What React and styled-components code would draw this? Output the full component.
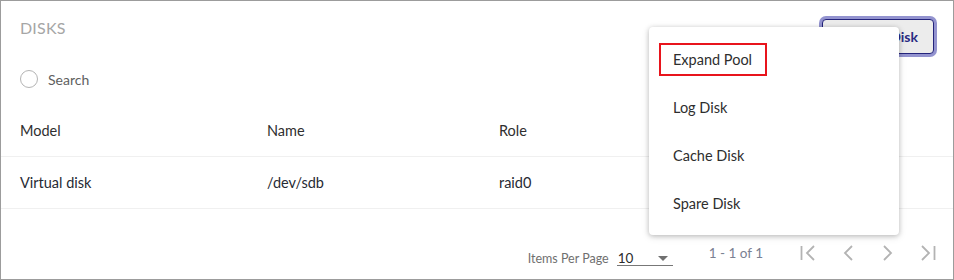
import React from "react";
import styled, { createGlobalStyle } from "styled-components";

const Global = createGlobalStyle`
  html, body { margin: 0; padding: 0; background: #fff; }
  body { font-family: Lato, "Open Sans", "Liberation Sans", sans-serif; }
  * { box-sizing: border-box; }
`;

const Card = styled.div`
  position: relative;
  width: 954px;
  height: 280px;
  border: 1px solid #9c9c9c;
  background: #fff;
  display: flex;
  flex-direction: column;
`;

const Header = styled.div`
  display: flex;
  justify-content: space-between;
  align-items: flex-start;
  padding: 16px 19px 0 19px;
`;

const Title = styled.h2`
  margin: 0;
  font-size: 16px;
  line-height: 22px;
  font-weight: 400;
  color: #a6a6a6;
  letter-spacing: 0.2px;
`;

const Button = styled.button`
  margin-top: 2px;
  height: 35px;
  width: 112px;
  border: 1px solid #24247c;
  border-radius: 4px;
  box-shadow: 0 0 0 3px #9393cf;
  background: #ececec;
  color: #2a2a82;
  font-family: inherit;
  font-weight: 700;
  font-size: 14px;
  display: flex;
  align-items: center;
  justify-content: flex-end;
  padding: 0 15px;
  gap: 8px;
`;

const SearchRow = styled.div`
  display: flex;
  align-items: center;
  gap: 10px;
  height: 34px;
  margin-top: 8px;
  padding-left: 19px;
`;

const Radio = styled.span`
  width: 18px;
  height: 18px;
  border-radius: 50%;
  border: 1.5px solid #b4b4b4;
`;

const SearchText = styled.span`
  font-size: 14px;
  color: #606060;
`;

const Table = styled.div`
  margin-top: 9px;
`;

const Row = styled.div`
  display: grid;
  grid-template-columns: 247px 232px 1fr;
  align-items: center;
  height: ${(p) => p.$h}px;
  padding-left: 19px;
  border-bottom: 1px solid #f0f0f0;
  font-size: 14.5px;
  color: ${(p) => (p.$head ? "#2f2f2f" : "#262a33")};
`;

const Footer = styled.div`
  display: flex;
  justify-content: flex-end;
  align-items: flex-start;
  margin-top: 34px;
  padding-right: 17px;
  height: 24px;
`;

const PageSize = styled.div`
  display: flex;
  align-items: flex-end;
  gap: 8px;
  margin-top: 7px;
  height: 16px;
`;

const SizeLabel = styled.span`
  font-size: 12.5px;
  line-height: 14px;
  color: #6f6f6f;
`;

const Select = styled.div`
  width: 56px;
  height: 16px;
  border-bottom: 1px solid #777;
  display: flex;
  align-items: center;
  justify-content: space-between;
  padding: 0 5px 0 1px;
  font-size: 13.5px;
  color: #2b2b2b;
`;

const Caret = styled.span`
  width: 0;
  height: 0;
  border-left: 5px solid transparent;
  border-right: 5px solid transparent;
  border-top: 5px solid #707070;
  margin-top: 2px;
`;

const Range = styled.span`
  font-size: 13.5px;
  line-height: 20px;
  color: #7a8092;
  margin-left: 36px;
`;

const Pager = styled.div`
  display: flex;
  gap: 24px;
  margin-left: 37px;
  height: 20px;
  align-items: center;
`;

const PagerIcon = styled.svg`
  width: 16px;
  height: 16px;
  stroke: #b3b3b3;
  stroke-width: 1.8;
  fill: none;
`;

const Menu = styled.div`
  position: absolute;
  left: 648px;
  top: 26px;
  width: 250px;
  padding: 8px 0;
  background: #fff;
  border-radius: 4px;
  box-shadow: 0 1px 5px rgba(0, 0, 0, 0.22), 0 2px 8px rgba(0, 0, 0, 0.1);
  display: flex;
  flex-direction: column;
`;

const MenuItem = styled.div`
  height: 48px;
  display: flex;
  align-items: center;
  padding-left: 24px;
  font-size: 14.5px;
  color: #2e2e2e;
`;

const Mark = styled.span`
  margin-left: ${(p) => (p.$on ? "-14px" : "0")};
  padding: ${(p) => (p.$on ? "6px 13px 6px 12px" : "0")};
  border: ${(p) => (p.$on ? "2px solid #e8141c" : "none")};
  line-height: 17px;
`;

const icons = {
  first: (
    <>
      <line x1="1.5" y1="1" x2="1.5" y2="15" />
      <polyline points="14,1 7,8 14,15" />
    </>
  ),
  prev: <polyline points="12,1 5,8 12,15" />,
  next: <polyline points="4,1 11,8 4,15" />,
  last: (
    <>
      <polyline points="2,1 9,8 2,15" />
      <line x1="14.5" y1="1" x2="14.5" y2="15" />
    </>
  ),
};

const menuItems = ["Expand Pool", "Log Disk", "Cache Disk", "Spare Disk"];

export default function App() {
  return (
    <>
      <Global />
      <Card>
        <Header>
          <Title>DISKS</Title>
          <Button>Add Disk</Button>
        </Header>
        <SearchRow>
          <Radio />
          <SearchText>Search</SearchText>
        </SearchRow>
        <Table>
          <Row $head $h={52}>
            <span>Model</span>
            <span>Name</span>
            <span>Role</span>
          </Row>
          <Row $h={52}>
            <span>Virtual disk</span>
            <span>/dev/sdb</span>
            <span>raid0</span>
          </Row>
        </Table>
        <Footer>
          <PageSize>
            <SizeLabel>Items Per Page</SizeLabel>
            <Select>
              <span>10</span>
              <Caret />
            </Select>
          </PageSize>
          <Range>1 - 1 of 1</Range>
          <Pager>
            {["first", "prev", "next", "last"].map((k) => (
              <PagerIcon key={k} viewBox="0 0 16 16">
                {icons[k]}
              </PagerIcon>
            ))}
          </Pager>
        </Footer>
        <Menu>
          {menuItems.map((m, i) => (
            <MenuItem key={m}>
              <Mark $on={i === 0}>{m}</Mark>
            </MenuItem>
          ))}
        </Menu>
      </Card>
    </>
  );
}
